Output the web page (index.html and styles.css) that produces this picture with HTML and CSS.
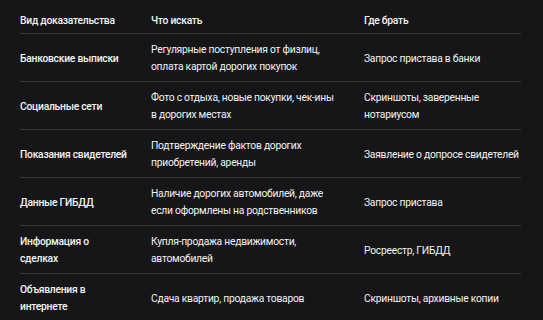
FILE: index.html
```html
<!DOCTYPE html>
<html lang="ru">
<head>
<meta charset="utf-8">
<link rel="stylesheet" href="styles.css">
</head>
<body>
<table class="evidence">
  <colgroup>
    <col class="c1"><col class="c2"><col class="c3">
  </colgroup>
  <thead>
    <tr><th>Вид доказательства</th><th>Что искать</th><th>Где брать</th></tr>
  </thead>
  <tbody>
    <tr><td class="kind">Банковские выписки</td><td>Регулярные поступления от физлиц,<br>оплата картой дорогих покупок</td><td>Запрос пристава в банки</td></tr>
    <tr><td class="kind">Социальные сети</td><td>Фото с отдыха, новые покупки, чек-ины<br>в дорогих местах</td><td>Скриншоты, заверенные<br>нотариусом</td></tr>
    <tr><td class="kind">Показания свидетелей</td><td>Подтверждение фактов дорогих<br>приобретений, аренды</td><td>Заявление о допросе свидетелей</td></tr>
    <tr><td class="kind">Данные ГИБДД</td><td>Наличие дорогих автомобилей, даже<br>если оформлены на родственников</td><td>Запрос пристава</td></tr>
    <tr><td class="kind">Информация о<br>сделках</td><td>Купля-продажа недвижимости,<br>автомобилей</td><td>Росреестр, ГИБДД</td></tr>
    <tr class="last"><td class="kind">Объявления в<br>интернете</td><td>Сдача квартир, продажа товаров</td><td>Скриншоты, архивные копии</td></tr>
  </tbody>
</table>
</body>
</html>
```

FILE: styles.css
```css
html, body {
  margin: 0;
  padding: 0;
  background: #161618;
}
body {
  padding: 0 22px 0 20px;
  font-family: Roboto, "Noto Sans", sans-serif;
  font-size: 10.3px;
  line-height: 17px;
  letter-spacing: -0.25px;
  color: #f4f4f4;
}
.evidence {
  width: 501px;
  border-collapse: collapse;
  table-layout: fixed;
}
.c1 { width: 131px; }
.c2 { width: 213px; }
.c3 { width: 157px; }
th, td {
  text-align: left;
  white-space: nowrap;
  vertical-align: middle;
  border-bottom: 1px solid #38383b;
}
th {
  font-weight: 500;
  padding: 12px 0 4px 0;
}
td {
  padding: 7px 0 6px 0;
}
.kind { font-weight: 500; }
.last td { border-bottom: none; }
```
